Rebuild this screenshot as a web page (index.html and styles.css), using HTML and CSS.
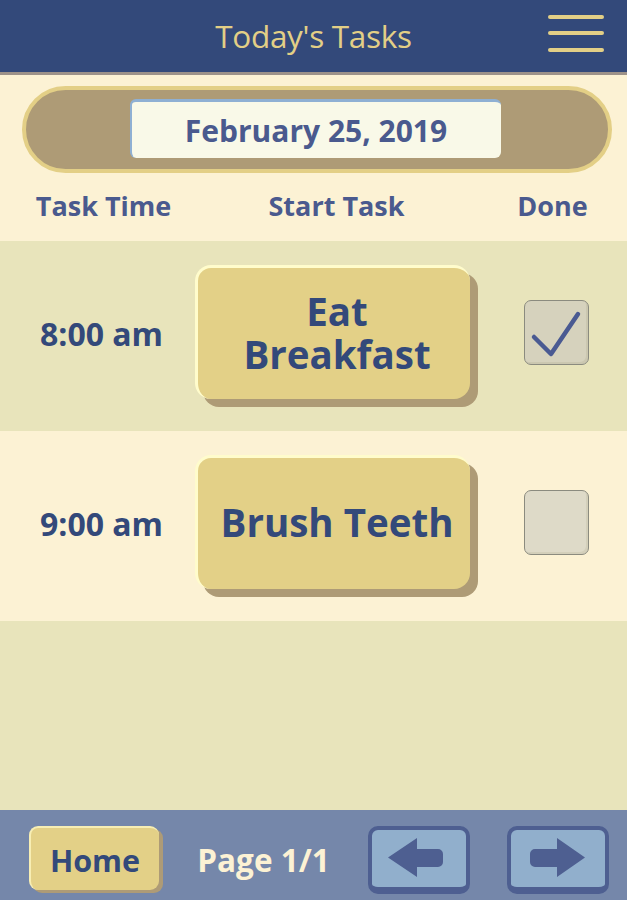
FILE: index.html
```html
<!DOCTYPE html>
<html>
<head>
<meta charset="utf-8">
<link rel="stylesheet" href="styles.css">
</head>
<body>
<div class="app">
  <header class="topbar">
    <div class="spacer"></div>
    <h1 class="title">Today's Tasks</h1>
    <div class="menu">
      <svg width="56" height="40" viewBox="0 0 56 40">
        <line x1="2" y1="3" x2="54" y2="3" />
        <line x1="2" y1="19" x2="54" y2="19" />
        <line x1="2" y1="36" x2="54" y2="36" />
      </svg>
    </div>
  </header>

  <section class="datebar">
    <div class="datepill">
      <div class="datebox">February 25, 2019</div>
    </div>
  </section>

  <div class="colheads">
    <div class="ch ch-time">Task Time</div>
    <div class="ch ch-task">Start Task</div>
    <div class="ch ch-done">Done</div>
  </div>

  <div class="row row-alt">
    <div class="time">8:00 am</div>
    <div class="taskcell"><button class="taskbtn"><span class="line">Eat</span><span class="line">Breakfast</span></button></div>
    <div class="donecell">
      <div class="check">
        <svg width="64" height="64" viewBox="0 0 64 64">
          <polyline points="10,37 27,54 54,14" />
        </svg>
      </div>
    </div>
  </div>

  <div class="row">
    <div class="time">9:00 am</div>
    <div class="taskcell"><button class="taskbtn"><span class="line">Brush Teeth</span></button></div>
    <div class="donecell">
      <div class="check check-empty"></div>
    </div>
  </div>

  <div class="filler"></div>

  <footer class="footer">
    <button class="homebtn">Home</button>
    <div class="page">Page 1/1</div>
    <button class="arrowbtn arrow-left">
      <svg width="94" height="57" viewBox="0 0 94 57">
        <path d="M16 27.5 L45 8 V19 H66 A5 5 0 0 1 71 24 V32 A5 5 0 0 1 66 37 H45 V47 Z" />
      </svg>
    </button>
    <button class="arrowbtn arrow-right">
      <svg width="94" height="57" viewBox="0 0 94 57">
        <path d="M74 27.5 L46 8 V19 H24 A5 5 0 0 0 19 24 V32 A5 5 0 0 0 24 37 H46 V47 Z" />
      </svg>
    </button>
  </footer>
</div>
</body>
</html>
```

FILE: styles.css
```css
* { box-sizing: border-box; }
html, body {
  margin: 0;
  padding: 0;
}
body {
  font-family: "Open Sans", "Noto Sans", sans-serif;
  background: #e8e4bb;
}
.app {
  width: 627px;
  height: 900px;
  display: flex;
  flex-direction: column;
  overflow: hidden;
}

/* header */
.topbar {
  height: 75px;
  flex: none;
  background: #33497a;
  border-bottom: 3px solid #9d9289;
  display: grid;
  grid-template-columns: 1fr auto 1fr;
  align-items: center;
}
.title {
  margin: 0;
  font-weight: 400;
  font-size: 31.5px;
  color: #e3cf86;
  letter-spacing: -0.3px;
  padding-bottom: 2px;
}
.menu {
  justify-self: end;
  margin-right: 23px;
  height: 40px;
  margin-top: -4px;
}
.menu svg line {
  stroke: #e3cf86;
  stroke-width: 4;
  stroke-linecap: round;
}

/* date */
.datebar {
  background: #fcf2d4;
  padding: 11px 15px 0 22px;
  flex: none;
}
.datepill {
  height: 87px;
  border: 4px solid #e3cf86;
  background: #ae9b76;
  border-radius: 44px;
  display: flex;
  justify-content: center;
  padding: 9px 4px 0 0;
}
.datebox {
  width: 371px;
  height: 59px;
  background: #f9f9e8;
  border-top: 3px solid #8fb0d3;
  border-left: 2px solid #8fb0d3;
  border-radius: 6px;
  display: flex;
  align-items: center;
  justify-content: center;
  font-weight: 700;
  font-size: 30px;
  color: #4a5a8e;
}

/* column headers */
.colheads {
  flex: none;
  height: 68px;
  background: #fcf2d4;
  display: grid;
  grid-template-columns: 195px 283px 1fr;
  align-items: center;
  font-weight: 700;
  font-size: 27px;
  color: #4a5a8e;
  padding-bottom: 4px;
}
.ch { text-align: center; }
.ch-time { padding-left: 12px; }

/* rows */
.row {
  flex: none;
  height: 190px;
  background: #fcf2d4;
  display: grid;
  grid-template-columns: 195px 283px 1fr;
  align-items: center;
  padding-bottom: 8px;
}
.row-alt { background: #e8e4bb; }
.time {
  text-align: center;
  padding-left: 8px;
  font-weight: 700;
  font-size: 32px;
  color: #33497a;
  padding-top: 3px;
}
.taskcell { display: flex; }
.taskbtn {
  width: 275px;
  height: 134px;
  border: none;
  border-top: 3px solid #fffccc;
  border-left: 3px solid #fffccc;
  border-radius: 16px;
  background: #e3d087;
  box-shadow: 8px 8px 0 #ae9b76;
  font-family: inherit;
  font-weight: 700;
  font-size: 38.5px;
  color: #33497a;
  padding: 0 0 2px 6px;
  margin: 0;
  display: flex;
  flex-direction: column;
  align-items: center;
  justify-content: center;
}
.taskbtn .line {
  display: block;
  line-height: 43px;
}
.donecell {
  display: flex;
  padding-left: 46px;
}
.check {
  width: 65px;
  height: 65px;
  border: 1px solid #8b8b7f;
  border-radius: 7px;
  background: #d6d2bd;
  box-shadow: inset -2px -2px 0 #cbc7b0;
}
.check svg {
  display: block;
  margin: -1px 0 0 -1px;
}
.check svg polyline {
  fill: none;
  stroke: #4a5a92;
  stroke-width: 4.5;
  stroke-linecap: round;
  stroke-linejoin: round;
}
.check-empty { background: #dedac8; box-shadow: inset -2px -2px 0 #d3cfba; }

.filler {
  flex: 1;
  background: #e8e4bb;
}

/* footer */
.footer {
  flex: none;
  height: 90px;
  background: #7587aa;
  display: flex;
  align-items: flex-start;
  padding: 16px 0 0 29px;
}
.homebtn {
  width: 130px;
  height: 64px;
  flex: none;
  border: none;
  border-top: 2px solid #f7eeb4;
  border-left: 2px solid #f7eeb4;
  border-radius: 9px;
  background: #e3d087;
  box-shadow: 4px 3px 0 #ae9b76;
  font-family: inherit;
  font-weight: 700;
  font-size: 30.5px;
  color: #33497a;
  padding: 2px 0 0 0;
  margin: 0;
}
.page {
  width: 209px;
  flex: none;
  height: 68px;
  display: flex;
  align-items: center;
  justify-content: center;
  padding-bottom: 2px;
  font-weight: 700;
  font-size: 31.5px;
  color: #fcf2d4;
}
.arrowbtn {
  width: 102px;
  height: 68px;
  flex: none;
  margin: 0;
  padding: 0;
  background: #91afcc;
  border: 4px solid #4e5f91;
  border-bottom-width: 7px;
  border-radius: 10px;
  display: block;
}
.arrowbtn svg { display: block; }
.arrowbtn path { fill: #4e5f91; }
.arrow-right { margin-left: 37px; }
```
